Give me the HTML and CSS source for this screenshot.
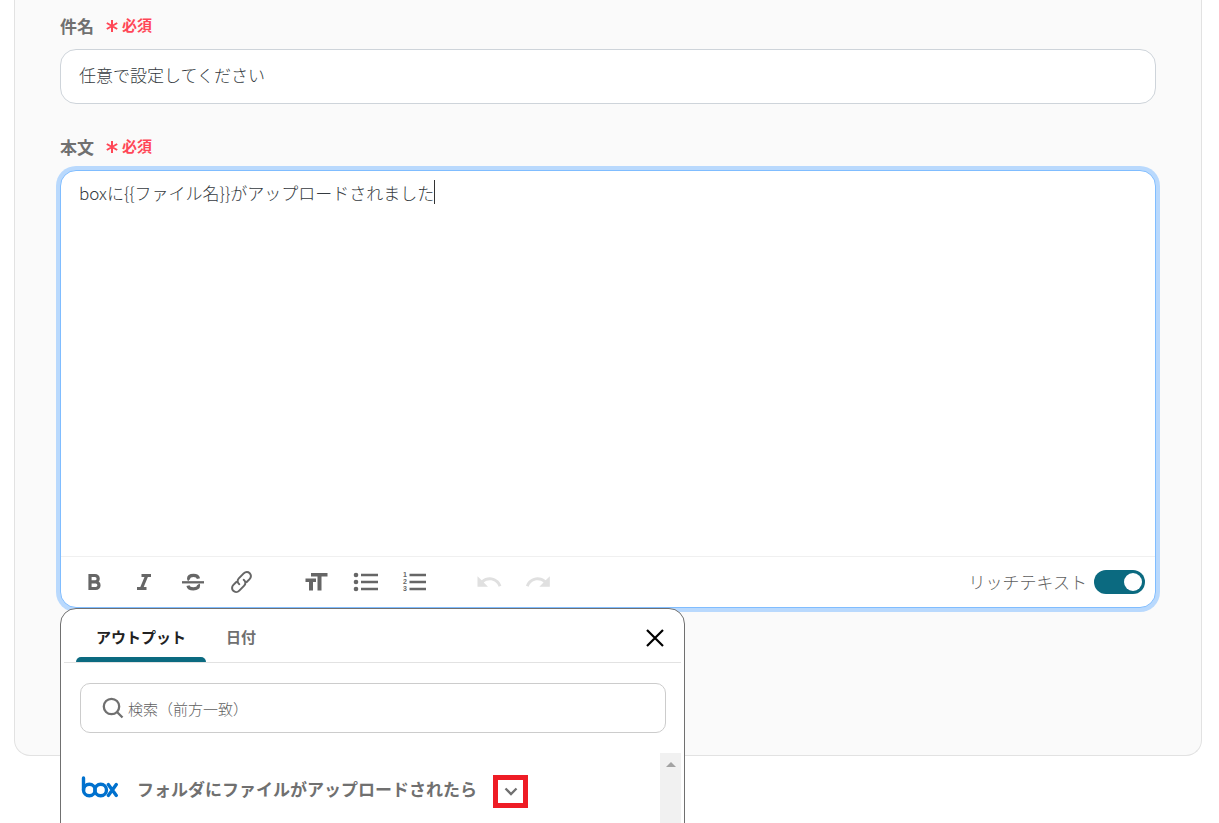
FILE: index.html
```html
<!DOCTYPE html>
<html lang="ja">
<head>
    <meta charset="UTF-8">
    <meta name="viewport" content="width=device-width, initial-scale=1.0">
    <title>メール設定</title>
    <link rel="stylesheet" href="styles.css">
</head>
<body>

<main class="card">
    <div class="field-label">
        <label for="subject">件名</label>
        <span class="required">
            <svg width="12" height="12" viewBox="0 0 12 12"><path d="M6 0v12M0.8 3l10.4 6M11.2 3L0.8 9"/></svg>
            必須
        </span>
    </div>
    <input class="subject" type="text" id="subject" value="任意で設定してください">

    <div class="field-label">
        <label for="body">本文</label>
        <span class="required">
            <svg width="12" height="12" viewBox="0 0 12 12"><path d="M6 0v12M0.8 3l10.4 6M11.2 3L0.8 9"/></svg>
            必須
        </span>
    </div>

    <div class="editor">
        <div class="editor-content">
            <textarea id="body" rows="1" spellcheck="false">boxに{{ファイル名}}がアップロードされました</textarea>
            <span class="caret"></span>
        </div>

        <div class="toolbar">
            <div class="tools">
                <button type="button" aria-label="太字">
                    <svg width="26" height="26" viewBox="0 0 26 26"><path class="line thick" d="M8 6.5h5a3.2 3.2 0 0 1 0 6.4H8zM8 12.900h5.700a3.300 3.300 0 0 1 0 6.600H8z"/></svg>
                </button>
                <button type="button" aria-label="斜体">
                    <svg width="26" height="26" viewBox="0 0 26 26"><path class="line thick" d="M10.5 6.5H20M6 19.5h9.5M15.8 6.5l-5.4 13"/></svg>
                </button>
                <button type="button" aria-label="取り消し線">
                    <svg width="26" height="26" viewBox="0 0 26 26"><path class="line thick" d="M18.500 9.600C18 7.400 16.300 6.400 13.500 6.400c-3 0-4.900 1.300-4.900 3.200 0 .6.200 1 .6 1.400M8 16.600c.4 2.100 2.300 3.200 5.400 3.200 3.200 0 5.100-1.300 5.100-3.200 0-.4-.1-.8-.3-1.100"/><path class="line" d="M2 13.300h22"/></svg>
                </button>
                <button type="button" aria-label="リンク">
                    <svg width="26" height="26" viewBox="0 0 26 26"><path class="line round" d="M10.300 15.200c-2.200-1.800-2.100-4.200-.5-5.800l4.900-5c1.900-1.900 4.500-1.700 6-.2 1.600 1.600 1.700 4.100-.1 5.900l-2.900 2.900M14.700 10.800c2.200 1.800 2.100 4.200.5 5.800l-4.900 5c-1.900 1.900-4.500 1.700-6 .2-1.600-1.600-1.700-4.100.1-5.900l2.900-2.900"/></svg>
                </button>
            </div>
            <div class="tools">
                <button type="button" aria-label="文字サイズ">
                    <svg width="26" height="26" viewBox="0 0 26 26"><path d="M8 4h16.500v3.500h-6v14h-4v-14H8zM2.500 9.500H13V13h-3v8.500H6V13H2.500z"/></svg>
                </button>
                <button type="button" aria-label="箇条書き">
                    <svg width="26" height="26" viewBox="0 0 26 26"><circle cx="4" cy="6" r="2.300"/><circle cx="4" cy="13" r="2.300"/><circle cx="4" cy="20" r="2.300"/><path class="line" d="M9 6h17M9 13h17M9 20h17"/></svg>
                </button>
                <button type="button" aria-label="番号付きリスト">
                    <svg width="26" height="26" viewBox="0 0 26 26"><text x="2" y="8">1</text><text x="2" y="15">2</text><text x="2" y="22">3</text><path class="line" d="M8.500 6H25M8.500 13H25M8.500 20H25"/></svg>
                </button>
            </div>
            <div class="tools">
                <button type="button" aria-label="元に戻す" disabled>
                    <svg width="28" height="28" viewBox="-1 0 24 24"><path d="M12.500 8c-2.650 0-5.050.99-6.900 2.600L2 7v9h9l-3.620-3.620c1.390-1.160 3.160-1.880 5.120-1.880 3.540 0 6.550 2.310 7.600 5.500l2.370-.78C21.080 11.030 17.150 8 12.500 8z"/></svg>
                </button>
                <button type="button" aria-label="やり直す" disabled>
                    <svg width="28" height="28" viewBox="-1 0 24 24"><path d="M18.400 10.600C16.550 8.990 14.150 8 11.500 8c-4.650 0-8.580 3.030-9.960 7.220L3.900 16c1.050-3.190 4.050-5.500 7.600-5.500 1.950 0 3.730.72 5.120 1.880L13 16h9V7l-3.600 3.600z"/></svg>
                </button>
            </div>
            <label class="rich-text" for="richText">リッチテキスト</label>
            <input class="switch" type="checkbox" id="richText" checked>
        </div>

        <section class="popup">
            <div class="popup-header">
                <div class="tabs">
                    <button class="tab active" type="button">アウトプット</button>
                    <button class="tab" type="button">日付</button>
                </div>
                <button class="close" type="button" aria-label="閉じる">
                    <svg width="20" height="20" viewBox="0 0 20 20"><path d="M2 2l16 16M18 2L2 18"/></svg>
                </button>
            </div>
            <div class="search">
                <svg width="22" height="22" viewBox="0 0 22 22"><circle cx="9.500" cy="9.500" r="7.700"/><path d="M15 15l5.500 5.500"/></svg>
                <input type="text" placeholder="検索（前方一致）" aria-label="検索（前方一致）">
            </div>
            <div class="outputs">
                <div class="output">
                    <svg class="box-logo" width="38" height="24" viewBox="0 0 38 24" role="img" aria-label="box"><path d="M2.500 2v12"/><circle cx="8.300" cy="14" r="5.800"/><circle cx="19.700" cy="14" r="5.800"/><path d="M27.300 8.500l8 11M35.300 8.500l-8 11"/></svg>
                    <span class="output-name">フォルダにファイルがアップロードされたら</span>
                    <button class="expand" type="button" aria-label="開く">
                        <svg width="16" height="16" viewBox="0 0 16 16"><path d="M2.500 5.500L8 11l5.500-5.500"/></svg>
                    </button>
                </div>
                <div class="scrollbar">
                    <svg width="10" height="5" viewBox="0 0 10 5"><path d="M5 0l5 5H0z"/></svg>
                </div>
            </div>
        </section>
    </div>
</main>

</body>
</html>
```
FILE: styles.css
```css
* {
    box-sizing: border-box;
}
body {
    margin: 0;
    height: 100vh;
    overflow: hidden;
    background: #fff;
    color: #495057;
    font-family: "Noto Sans CJK JP", sans-serif;
    font-size: 17px;
}
button, input, textarea {
    font: inherit;
    color: inherit;
}
button {
    padding: 0;
    border: none;
    background: none;
    cursor: pointer;
}
svg {
    display: block;
    flex: none;
}
.card {
    margin: 0 17px 0 14px;
    padding: 11px 45px 147px;
    background: #fafafa;
    border: 1px solid #e2e2e2;
    border-top: none;
    border-radius: 0 0 16px 16px;
}
.field-label {
    display: flex;
    align-items: center;
    gap: 12px;
    height: 28px;
    margin-bottom: 10px;
    color: #707070;
    font-weight: bold;
}
.required {
    display: flex;
    align-items: center;
    gap: 4px;
    color: #ff4757;
    font-size: 15px;
    line-height: 20px;
}
.required svg {
    margin-top: 2px;
    fill: none;
    stroke: #ff4757;
    stroke-width: 2;
}
.subject {
    display: block;
    width: 100%;
    height: 55px;
    margin-bottom: 28px;
    padding: 0 18px 4px;
    background: #fff;
    border: 1px solid #ced4da;
    border-radius: 16px;
    outline: none;
    color: #343a40;
    font-weight: 300;
}

/* editor */
.editor {
    position: relative;
    background: #fff;
    border: 1px solid #80bdff;
    border-radius: 16px;
    box-shadow: 0 0 0 4px #b9d9fd;
}
.editor-content {
    display: flex;
    height: 385px;
    padding: 9px 18px;
}
.editor-content textarea {
    field-sizing: content;
    height: 26px;
    padding: 0;
    border: none;
    outline: none;
    resize: none;
    overflow: hidden;
    background: none;
    color: #343a40;
    font-weight: 300;
    line-height: 26px;
}
.caret {
    width: 1px;
    height: 24px;
    background: #333;
}
.toolbar {
    display: flex;
    align-items: center;
    gap: 25px;
    height: 51px;
    padding: 0 10px 0 9px;
    border-top: 1px solid #f0f0f0;
}
.tools {
    display: flex;
}
.tools button {
    display: flex;
    justify-content: center;
    align-items: center;
    width: 49px;
    height: 40px;
    fill: #666;
}
.tools button:disabled {
    fill: #e0e0e0;
}
.tools .line {
    fill: none;
    stroke: #666;
    stroke-width: 2.3;
}
.tools .thick {
    stroke-width: 3.2;
}
.tools .round {
    stroke-width: 2;
    stroke-linecap: round;
}
.tools text {
    font-family: "Liberation Sans", sans-serif;
    font-size: 7px;
    font-weight: bold;
}
.rich-text {
    margin-left: auto;
    padding-bottom: 2px;
    color: #606060;
    font-weight: 300;
}
.switch {
    display: flex;
    align-items: center;
    appearance: none;
    width: 51px;
    height: 24px;
    margin: 0 0 0 -18px;
    padding: 3px;
    background: #ccc;
    border-radius: 12px;
    cursor: pointer;
}
.switch::before {
    content: "";
    width: 18px;
    height: 18px;
    background: #fff;
    border-radius: 50%;
}
.switch:checked {
    justify-content: flex-end;
    background: #0b6a80;
}

/* output picker */
.popup {
    position: absolute;
    top: 100%;
    left: -1px;
    width: 625px;
    margin-top: 1px;
    padding: 0 3px;
    background: #fff;
    border: 1px solid #707070;
    border-radius: 16px;
}
.popup-header {
    display: flex;
    justify-content: space-between;
    height: 54px;
    padding: 0 16px 0 12px;
    border-bottom: 1px solid #e2e2e2;
}
.tabs {
    display: flex;
}
.tab {
    padding: 2px 20px 0;
    color: #707070;
    font-size: 15px;
    font-weight: bold;
}
.tab.active {
    position: relative;
    color: #222;
}
.tab.active::after {
    content: "";
    position: absolute;
    left: 0;
    right: 0;
    bottom: 0;
    height: 5px;
    background: #0b6a80;
    border-radius: 5px 5px 0 0;
}
.close {
    padding-top: 5px;
}
.close svg {
    fill: none;
    stroke: #000;
    stroke-width: 2.2;
}
.search {
    display: flex;
    align-items: center;
    gap: 4px;
    height: 50px;
    margin: 20px 15px 20px 16px;
    padding: 0 21px;
    border: 1px solid #ccc;
    border-radius: 10px;
}
.search svg {
    fill: none;
    stroke: #707070;
    stroke-width: 2.3;
}
.search input {
    flex: 1;
    padding: 0;
    border: none;
    outline: none;
    font-size: 15px;
}
.search input::placeholder {
    color: #606060;
    font-weight: 300;
}
.outputs {
    display: flex;
    justify-content: space-between;
    height: 240px;
}
.output {
    display: flex;
    align-items: center;
    height: 72px;
    padding-left: 17px;
}
.box-logo {
    margin-bottom: 2px;
    fill: none;
    stroke: #0071ce;
    stroke-width: 3.4;
    stroke-linecap: round;
}
.output-name {
    margin: 0 16px 2px 18px;
    color: #707070;
    font-weight: bold;
}
.expand {
    display: flex;
    justify-content: center;
    align-items: center;
    width: 35px;
    height: 33px;
    margin-top: 4px;
    border: 5px solid #ee1c25;
}
.expand svg {
    fill: none;
    stroke: #707070;
    stroke-width: 2.3;
}
.scrollbar {
    display: flex;
    justify-content: center;
    width: 21px;
    padding-top: 9px;
    background: #f1f1f1;
}
.scrollbar svg {
    fill: #a3a3a3;
}
```
